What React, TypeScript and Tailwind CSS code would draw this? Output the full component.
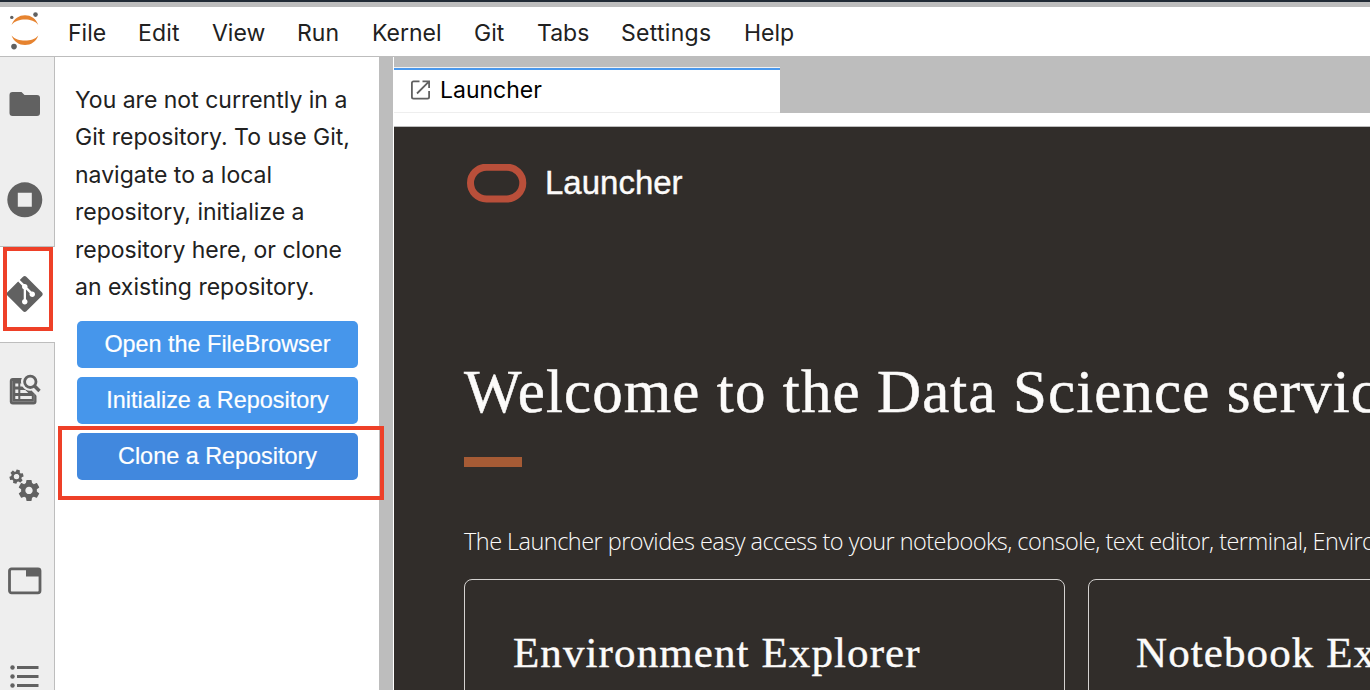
import React from "react";

const GEAR =
  "M19.43 12.98c.04-.32.07-.64.07-.98s-.03-.66-.07-.98l2.11-1.65c.19-.15.24-.42.12-.64l-2-3.46c-.12-.22-.39-.3-.61-.22l-2.49 1c-.52-.4-1.08-.73-1.69-.98l-.38-2.65C14.46 2.18 14.25 2 14 2h-4c-.25 0-.46.18-.49.42l-.38 2.65c-.61.25-1.17.59-1.69.98l-2.49-1c-.23-.09-.49 0-.61.22l-2 3.46c-.13.22-.07.49.12.64l2.11 1.65c-.04.32-.07.65-.07.98s.03.66.07.98l-2.11 1.65c-.19.15-.24.42-.12.64l2 3.46c.12.22.39.3.61.22l2.49-1c.52.4 1.08.73 1.69.98l.38 2.65c.03.24.24.42.49.42h4c.25 0 .46-.18.49-.42l.38-2.65c.61-.25 1.17-.59 1.69-.98l2.49 1c.23.09.49 0 .61-.22l2-3.46c.12-.22.07-.49-.12-.64l-2.11-1.65zM12 15.5c-1.93 0-3.5-1.57-3.5-3.5s1.57-3.5 3.5-3.5 3.5 1.57 3.5 3.5-1.57 3.5-3.5 3.5z";

const GIT =
  "M23.546 10.93L13.067.452c-.604-.603-1.582-.603-2.188 0L8.708 2.627l2.76 2.76c.645-.215 1.379-.07 1.889.441.516.515.658 1.258.438 1.9l2.658 2.66c.645-.223 1.387-.078 1.9.435.721.72.721 1.884 0 2.604-.719.719-1.881.719-2.6 0-.539-.541-.674-1.337-.404-1.996L12.86 8.955v6.525c.176.086.342.203.488.348.713.721.713 1.883 0 2.6-.719.721-1.889.721-2.609 0-.719-.719-.719-1.879 0-2.598.182-.18.387-.316.605-.406V8.835c-.217-.091-.424-.222-.6-.401-.545-.545-.676-1.342-.396-2.009L7.636 3.7.45 10.881c-.6.605-.6 1.584 0 2.189l10.48 10.477c.604.604 1.582.604 2.186 0l10.43-10.43c.605-.603.605-1.582 0-2.187";

function Logo() {
  return (
    <svg className="h-[49px] w-[50px] shrink-0" viewBox="0 7 50 49">
      <path d="M11.5 25C14 18.500 19 15.200 25 15.200S36 18.500 38.300 25C35 21 30.500 19.600 25 19.600S15 21 11.500 25Z" fill="#e6832f" />
      <path d="M11.500 35.500C14 41.800 19 45 25 45S36 41.800 38.300 35.500C35 39.300 30.500 40.600 25 40.600S15 39.300 11.500 35.500Z" fill="#e6832f" />
      <circle cx="35.500" cy="14.600" r="2.300" fill="#616161" />
      <circle cx="11.800" cy="17.400" r="1.700" fill="#616161" />
      <circle cx="14" cy="46.600" r="2.800" fill="#616161" />
    </svg>
  );
}

function Glyph({ children }: { children: React.ReactNode }) {
  return (
    <svg className="h-10 w-10 shrink-0" viewBox="0.5 0 40 40" fill="#616161">
      {children}
    </svg>
  );
}

function Slot({ active, short, children }: { active?: boolean; short?: boolean; children: React.ReactNode }) {
  return (
    <div
      className={
        active
          ? "relative flex h-[97px] shrink-0 justify-center border-y border-[#bdbdbd] bg-white pt-[27px] pr-[5px]"
          : short
            ? "flex h-[94px] shrink-0 justify-center border-r border-[#bdbdbd] pt-[28px] pr-1"
            : "flex h-[95px] shrink-0 justify-center border-r border-[#bdbdbd] pt-[27px] pr-1"
      }
    >
      {children}
    </div>
  );
}

function Sidebar() {
  return (
    <nav className="flex w-[55px] shrink-0 flex-col overflow-hidden bg-[#eeeeee]">
      <Slot>
        <Glyph>
          <path d="M8 8h9l3 3h12.500a3 3 0 0 1 3 3v15a3 3 0 0 1-3 3H8a3 3 0 0 1-3-3V11a3 3 0 0 1 3-3z" />
        </Glyph>
      </Slot>
      <Slot short>
        <Glyph>
          <path fillRule="evenodd" d="M20.300 2.300a17.500 17.500 0 1 0 0 35a17.500 17.500 0 1 0 0-35zM13.300 12.800h14v14h-14z" />
        </Glyph>
      </Slot>
      <Slot active>
        <Glyph>
          <g transform="translate(2.200 2) scale(1.5)">
            <path d={GIT} />
          </g>
        </Glyph>
        <div className="absolute top-0 left-[3px] h-[84px] w-[50px] border-4 border-[#ee4028]" />
      </Slot>
      <Slot>
        <Glyph>
          <rect x="5.300" y="8" width="26.700" height="26.500" rx="3" />
          <path d="M8 11v20.500h21.500V24" fill="none" stroke="#8a8a8a" strokeWidth=".7" />
          <path d="M10.800 13.500h3v3h-3zM15.800 13.500h3v3h-3zM10.800 19.500h3v3.500h-3zM15.800 20h5l3 3h-8zM10.800 26h3v3h-3zM15.800 26h11.500v3H15.800z" fill="#eee" />
          <path d="M25.500 2.500a9 9 0 0 0-7.300 14.200c2 3 5.500 4.500 8.800 3.800l5.500 5.500 4.500-6V4z" fill="#eee" />
          <circle cx="25.800" cy="11.800" r="5.700" fill="none" stroke="#616161" strokeWidth="2.800" />
          <path d="M29.800 15.800l5.200 5.200" stroke="#616161" strokeWidth="3.400" />
        </Glyph>
      </Slot>
      <Slot>
        <Glyph>
          <g transform="translate(11.900 12.800) scale(1.050)">
            <path d={GEAR} />
          </g>
          <g transform="translate(8.500 5.300)">
            <g transform="translate(-4.900 -2.100) scale(.7) rotate(15 12 12)">
              <path d={GEAR} />
            </g>
            <circle cx="3.500" cy="6.300" r="2.700" fill="#eee" />
          </g>
        </Glyph>
      </Slot>
      <Slot>
        <Glyph>
          <rect x="5" y="8.800" width="30.500" height="24" rx="2" fill="none" stroke="#616161" strokeWidth="2.800" />
          <path d="M21.500 9h13v7.500h-13z" />
        </Glyph>
      </Slot>
      <Slot>
        <Glyph>
          <circle cx="8" cy="12.500" r="2.200" />
          <circle cx="8" cy="21.500" r="2.200" />
          <circle cx="8" cy="30.500" r="2.200" />
          <path d="M12.500 11H34v3H12.500zM12.500 20H34v3H12.500zM12.500 29H34v3H12.500z" />
        </Glyph>
      </Slot>
    </nav>
  );
}

function Menu() {
  return (
    <header className="flex h-[50px] shrink-0 border-b border-[#bdbdbd] bg-white text-[23px] leading-[52px] text-[#212121]">
      <Logo />
      <div className="flex pl-[18px] whitespace-nowrap">
        <span className="w-[70px]">File</span>
        <span className="w-[74px] tracking-[0.2px]">Edit</span>
        <span className="w-[85px]">View</span>
        <span className="w-[75px]">Run</span>
        <span className="w-[102px]">Kernel</span>
        <span className="w-[63px]">Git</span>
        <span className="w-[84px]">Tabs</span>
        <span className="w-[123px] tracking-[0.3px]">Settings</span>
        <span>Help</span>
      </div>
    </header>
  );
}

function GitPanel() {
  const button =
    "h-[47px] w-[281px] rounded-[5px] pb-[2px] text-center font-['Liberation_Sans',sans-serif] text-[23.4px] leading-[44px] text-white [-webkit-text-stroke:0.2px_white]";
  return (
    <section className="w-[324px] shrink-0 bg-white pt-[25px] pl-[20px]">
      <p className="text-[23px] leading-[37.400px] whitespace-nowrap text-[#212121]">
        You are not currently in a<br />
        Git repository. To use Git,<br />
        navigate to a local<br />
        repository, initialize a<br />
        repository here, or clone<br />
        an existing repository.
      </p>
      <div className="mt-[15px] ml-[2px] flex flex-col gap-[9px]">
        <button className={`${button} bg-[#4696eb]`}>Open the FileBrowser</button>
        <button className={`${button} bg-[#4696eb]`}>Initialize a Repository</button>
        <div className="relative">
          <button className={`${button} block bg-[#4188de]`}>Clone a Repository</button>
          <div className="absolute -top-[7px] -left-[19px] h-[74px] w-[326px] border-4 border-[#ee4028]" />
        </div>
      </div>
    </section>
  );
}

function Launcher() {
  const card = "h-[200px] w-[601px] shrink-0 rounded-lg border border-[#d4d2d0] pt-[45px]";
  const title =
    "font-['Liberation_Serif',serif] text-[43px] leading-[56px] tracking-[1.1px] [-webkit-text-stroke:0.4px_#fcfbfa]";
  return (
    <div className="min-h-0 flex-1 overflow-hidden border-t border-[#bdbdbd] bg-[#312d2a] pl-[70px] whitespace-nowrap text-[#fcfbfa]">
      <div className="flex h-[112px] items-center gap-[18px] pl-[3px]">
        <svg className="h-[39px] w-[60px]" viewBox="0 0 60 39">
          <rect x="3.500" y="3.200" width="52.300" height="31.800" rx="16" fill="none" stroke="#b94f3a" strokeWidth="7" />
        </svg>
        <span className="font-['Liberation_Sans',sans-serif] text-[33px] [-webkit-text-stroke:0.4px_#fcfbfa]">Launcher</span>
      </div>
      <h1 className="mt-[113px] font-['Liberation_Serif',serif] text-[61px] leading-[80px] tracking-[1.1px] [-webkit-text-stroke:0.5px_#fcfbfa]">
        Welcome to the Data Science service
      </h1>
      <div className="mt-[25px] h-[10px] w-[58px] bg-[#a65b35]" />
      <p className="mt-[57px] font-['Open_Sans',sans-serif] text-[23.5px] leading-[34px] font-light tracking-[-0.530px]">
        The Launcher provides easy access to your notebooks, console, text editor, terminal, Environments
      </p>
      <div className="mt-[21px] flex gap-[23px]">
        <div className={`${card} pl-[48px]`}><h2 className={title}>Environment Explorer</h2></div>
        <div className={`${card} pl-[47px]`}><h2 className={title}>Notebook Explorer</h2></div>
      </div>
    </div>
  );
}

export default function App() {
  return (
    <div className="flex h-[690px] w-[1370px] flex-col overflow-hidden bg-[#bdbdbd] font-['Inter',sans-serif]">
      <div className="h-[7px] shrink-0 border-t-2 border-[#202a35]" />
      <Menu />
      <div className="flex min-h-0 flex-1">
        <Sidebar />
        <GitPanel />
        <main className="ml-[14px] flex min-w-0 flex-1 flex-col border-l border-white">
          <div className="mt-[10px] flex h-[46px] w-[386px] shrink-0 items-center border-t border-[#f2f2f2] bg-white">
            <div className="flex h-full w-full items-center border-t-2 border-b border-t-[#4a98ec] border-b-[#eeeeee] pb-[2px] pl-[16px]">
              <svg className="mr-[10px] h-5 w-5" viewBox="-0.500 0 20 20" fill="none" stroke="#616161" strokeWidth="1.800">
                <path d="M9 1.400H3A1.600 1.600 0 0 0 1.400 3v14A1.600 1.600 0 0 0 3 18.600h14a1.600 1.600 0 0 0 1.600-1.600v-6M12 1.400h6.600V8M18.600 1.400L6.500 13.500" />
              </svg>
              <span className="text-[23px] text-black">Launcher</span>
            </div>
          </div>
          <div className="h-[13px] shrink-0 bg-white" />
          <Launcher />
        </main>
      </div>
    </div>
  );
}
